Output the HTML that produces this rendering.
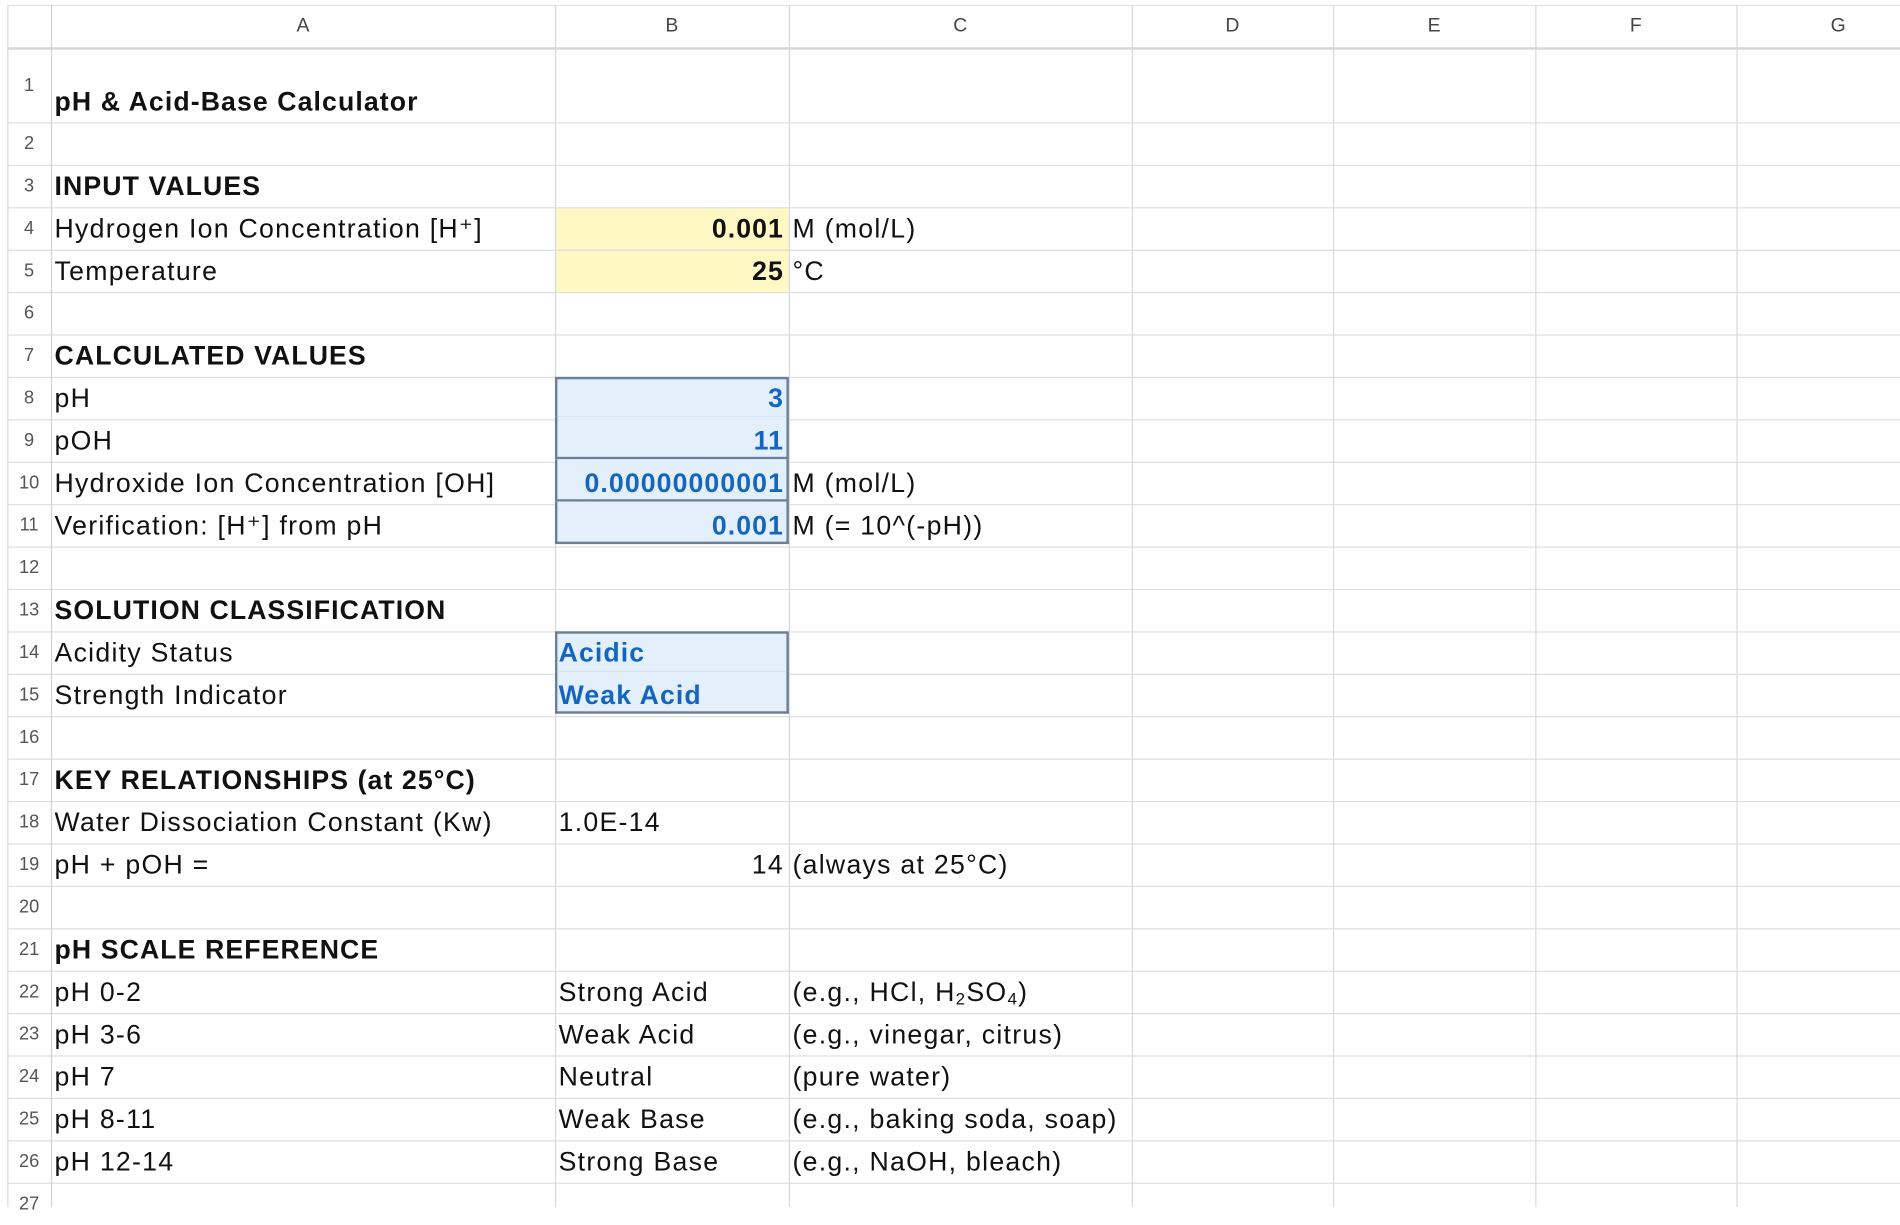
<!DOCTYPE html>
<html><head><meta charset="utf-8"><style>
html,body{margin:0;padding:0;background:#fff;width:1900px;height:1207px;overflow:hidden}
#w{position:absolute;left:0;top:0;width:1568px;height:996px;transform:scale(1.21173);transform-origin:0 0;font-family:"Liberation Sans",sans-serif;color:#111}
.h{position:absolute;left:6px;width:1562px;height:1px;background:#dcdfe4}
.v{position:absolute;top:4px;height:992px;width:1px;background:#d6d9e0}
.t{position:absolute;height:35px;line-height:35px;font-size:22px;white-space:nowrap;letter-spacing:1.05px}
.b{font-weight:bold;letter-spacing:0.9px}
.r{text-align:right}
.t.r{margin-right:-1px}
.n{position:absolute;left:6px;width:36px;text-align:center;font-size:15px;color:#555;height:35px;line-height:35px}
.c{position:absolute;top:4px;height:36px;line-height:36px;text-align:center;font-size:16px;color:#444}
.y{position:absolute;left:459px;width:192px;background:#fff8c5}
.bl{position:absolute;left:458px;width:189px;background:#e3f0fc;border:2px solid #6b7f99}
.blue{color:#1565c0;font-weight:bold;letter-spacing:0.9px}
sub{font-size:14px;vertical-align:-3px;line-height:0}
</style></head><body><div id="w">
<div class="y" style="top:171px;height:70px"></div>
<div class="h" style="top:4px;background:#e2e5ea"></div>
<div class="h" style="top:39px;height:2px;background:#d3d6dc"></div>
<div class="h" style="top:101px"></div><div class="h" style="top:136px"></div><div class="h" style="top:171px"></div><div class="h" style="top:206px"></div><div class="h" style="top:241px"></div><div class="h" style="top:276px"></div><div class="h" style="top:311px"></div><div class="h" style="top:346px"></div><div class="h" style="top:381px"></div><div class="h" style="top:416px"></div><div class="h" style="top:451px"></div><div class="h" style="top:486px"></div><div class="h" style="top:521px"></div><div class="h" style="top:556px"></div><div class="h" style="top:591px"></div><div class="h" style="top:626px"></div><div class="h" style="top:661px"></div><div class="h" style="top:696px"></div><div class="h" style="top:731px"></div><div class="h" style="top:766px"></div><div class="h" style="top:801px"></div><div class="h" style="top:836px"></div><div class="h" style="top:871px"></div><div class="h" style="top:906px"></div><div class="h" style="top:941px"></div><div class="h" style="top:976px"></div>
<div class="v" style="left:6px"></div><div class="v" style="left:42px;background:#cfd2d8"></div><div class="v" style="left:458px"></div><div class="v" style="left:651px"></div><div class="v" style="left:934px"></div><div class="v" style="left:1100px"></div><div class="v" style="left:1267px"></div><div class="v" style="left:1433px"></div>
<div class="bl" style="top:311px;height:31px"></div><div class="bl" style="top:344px;height:33px;border-top:0"></div>
<div class="bl" style="top:379px;height:33px;border-top:0"></div><div class="bl" style="top:414px;height:33px;border-top:0"></div>
<div class="bl" style="top:521px;height:31px"></div><div class="bl" style="top:554px;height:33px;border-top:0"></div>
<div class="c" style="left:42px;width:416px">A</div><div class="c" style="left:458px;width:193px">B</div><div class="c" style="left:651px;width:283px">C</div><div class="c" style="left:934px;width:166px">D</div><div class="c" style="left:1100px;width:167px">E</div><div class="c" style="left:1267px;width:166px">F</div><div class="c" style="left:1433px;width:168px">G</div>
<div class="n" style="top:53px">1</div><div class="n" style="top:101px">2</div><div class="n" style="top:136px">3</div><div class="n" style="top:171px">4</div><div class="n" style="top:206px">5</div><div class="n" style="top:241px">6</div><div class="n" style="top:276px">7</div><div class="n" style="top:311px">8</div><div class="n" style="top:346px">9</div><div class="n" style="top:381px">10</div><div class="n" style="top:416px">11</div><div class="n" style="top:451px">12</div><div class="n" style="top:486px">13</div><div class="n" style="top:521px">14</div><div class="n" style="top:556px">15</div><div class="n" style="top:591px">16</div><div class="n" style="top:626px">17</div><div class="n" style="top:661px">18</div><div class="n" style="top:696px">19</div><div class="n" style="top:731px">20</div><div class="n" style="top:766px">21</div><div class="n" style="top:801px">22</div><div class="n" style="top:836px">23</div><div class="n" style="top:871px">24</div><div class="n" style="top:906px">25</div><div class="n" style="top:941px">26</div><div class="n" style="top:976px">27</div>
<div class="t b" style="left:45px;top:66px">pH &amp; Acid-Base Calculator</div>
<div class="t b" style="left:45px;top:136px">INPUT VALUES</div>
<div class="t" style="left:45px;top:171px">Hydrogen Ion Concentration [H⁺]</div>
<div class="t b r" style="left:460px;width:187px;top:171px">0.001</div>
<div class="t" style="left:654px;top:171px">M (mol/L)</div>
<div class="t" style="left:45px;top:206px">Temperature</div>
<div class="t b r" style="left:460px;width:187px;top:206px">25</div>
<div class="t" style="left:654px;top:206px">°C</div>
<div class="t b" style="left:45px;top:276px">CALCULATED VALUES</div>
<div class="t" style="left:45px;top:311px">pH</div>
<div class="t blue r" style="left:460px;width:187px;top:311px">3</div>
<div class="t" style="left:45px;top:346px">pOH</div>
<div class="t blue r" style="left:460px;width:187px;top:346px">11</div>
<div class="t" style="left:45px;top:381px">Hydroxide Ion Concentration [OH]</div>
<div class="t blue r" style="left:460px;width:187px;top:381px">0.00000000001</div>
<div class="t" style="left:654px;top:381px">M (mol/L)</div>
<div class="t" style="left:45px;top:416px">Verification: [H⁺] from pH</div>
<div class="t blue r" style="left:460px;width:187px;top:416px">0.001</div>
<div class="t" style="left:654px;top:416px">M (= 10^(-pH))</div>
<div class="t b" style="left:45px;top:486px">SOLUTION CLASSIFICATION</div>
<div class="t" style="left:45px;top:521px">Acidity Status</div>
<div class="t blue" style="left:461px;top:521px">Acidic</div>
<div class="t" style="left:45px;top:556px">Strength Indicator</div>
<div class="t blue" style="left:461px;top:556px">Weak Acid</div>
<div class="t b" style="left:45px;top:626px">KEY RELATIONSHIPS (at 25°C)</div>
<div class="t" style="left:45px;top:661px">Water Dissociation Constant (Kw)</div>
<div class="t" style="left:461px;top:661px">1.0E-14</div>
<div class="t" style="left:45px;top:696px">pH + pOH =</div>
<div class="t r" style="left:460px;width:187px;top:696px">14</div>
<div class="t" style="left:654px;top:696px">(always at 25°C)</div>
<div class="t b" style="left:45px;top:766px">pH SCALE REFERENCE</div>
<div class="t" style="left:45px;top:801px">pH 0-2</div><div class="t" style="left:461px;top:801px">Strong Acid</div><div class="t" style="left:654px;top:801px">(e.g., HCl, H<sub>2</sub>SO<sub>4</sub>)</div>
<div class="t" style="left:45px;top:836px">pH 3-6</div><div class="t" style="left:461px;top:836px">Weak Acid</div><div class="t" style="left:654px;top:836px">(e.g., vinegar, citrus)</div>
<div class="t" style="left:45px;top:871px">pH 7</div><div class="t" style="left:461px;top:871px">Neutral</div><div class="t" style="left:654px;top:871px">(pure water)</div>
<div class="t" style="left:45px;top:906px">pH 8-11</div><div class="t" style="left:461px;top:906px">Weak Base</div><div class="t" style="left:654px;top:906px">(e.g., baking soda, soap)</div>
<div class="t" style="left:45px;top:941px">pH 12-14</div><div class="t" style="left:461px;top:941px">Strong Base</div><div class="t" style="left:654px;top:941px">(e.g., NaOH, bleach)</div>
</div></body></html>
